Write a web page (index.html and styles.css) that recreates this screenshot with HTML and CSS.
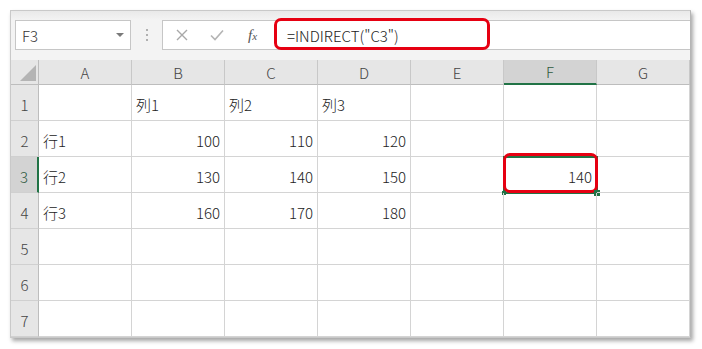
FILE: index.html
```html
<!DOCTYPE html>
<html lang="ja">

<head>
    <meta charset="UTF-8">
    <title>INDIRECT</title>
    <link rel="stylesheet" href="styles.css">
</head>

<body>
    <div class="window">
        <div class="toolbar">
            <div class="name-box">
                <span>F3</span>
                <span class="caret"></span>
            </div>
            <div class="dots"><i></i><i></i><i></i></div>
            <div class="formula-bar">
                <div class="buttons">
                    <svg class="btn" width="14" height="14" viewBox="0 0 14 14">
                        <path d="M2 2 L12 12 M12 2 L2 12" stroke="#a8a8a8" stroke-width="1.4" fill="none" />
                    </svg>
                    <svg class="btn" width="16" height="14" viewBox="0 0 16 14">
                        <path d="M2 7.5 L6 11.5 L14 2.5" stroke="#b4b4b4" stroke-width="1.6" fill="none" />
                    </svg>
                    <span class="fx">f<small>x</small></span>
                </div>
                <div class="formula">=INDIRECT("C3")</div>
                <div class="mark formula-mark"></div>
            </div>
        </div>

        <div class="sheet">
            <div class="corner"><span></span></div>
            <div class="col-head">A</div>
            <div class="col-head">B</div>
            <div class="col-head">C</div>
            <div class="col-head">D</div>
            <div class="col-head">E</div>
            <div class="col-head active">F</div>
            <div class="col-head">G</div>

            <div class="row-head">1</div>
            <div class="cell"></div>
            <div class="cell">列1</div>
            <div class="cell">列2</div>
            <div class="cell">列3</div>
            <div class="cell"></div>
            <div class="cell"></div>
            <div class="cell"></div>

            <div class="row-head">2</div>
            <div class="cell">行1</div>
            <div class="cell num">100</div>
            <div class="cell num">110</div>
            <div class="cell num">120</div>
            <div class="cell"></div>
            <div class="cell"></div>
            <div class="cell"></div>

            <div class="row-head active">3</div>
            <div class="cell">行2</div>
            <div class="cell num">130</div>
            <div class="cell num">140</div>
            <div class="cell num">150</div>
            <div class="cell"></div>
            <div class="cell num selected">140
                <span class="mark cell-mark"></span>
                <span class="handle left"></span>
                <span class="handle"></span>
            </div>
            <div class="cell"></div>

            <div class="row-head">4</div>
            <div class="cell">行3</div>
            <div class="cell num">160</div>
            <div class="cell num">170</div>
            <div class="cell num">180</div>
            <div class="cell"></div>
            <div class="cell"></div>
            <div class="cell"></div>

            <div class="row-head">5</div>
            <div class="cell"></div>
            <div class="cell"></div>
            <div class="cell"></div>
            <div class="cell"></div>
            <div class="cell"></div>
            <div class="cell"></div>
            <div class="cell"></div>

            <div class="row-head">6</div>
            <div class="cell"></div>
            <div class="cell"></div>
            <div class="cell"></div>
            <div class="cell"></div>
            <div class="cell"></div>
            <div class="cell"></div>
            <div class="cell"></div>

            <div class="row-head">7</div>
            <div class="cell"></div>
            <div class="cell"></div>
            <div class="cell"></div>
            <div class="cell"></div>
            <div class="cell"></div>
            <div class="cell"></div>
            <div class="cell"></div>
        </div>
    </div>
</body>

</html>
```

FILE: styles.css
```css
* {
    box-sizing: border-box;
}

body {
    margin: 0;
    padding: 10px;
    background-color: #ffffff;
    font-family: "Noto Sans CJK JP", "Noto Sans", sans-serif;
    font-weight: 300;
    color: #222;
}

.window {
    width: 681px;
    border: 1px solid #c9c9c9;
    border-right-color: #b5b5b5;
    background-color: #f3f3f3;
    box-shadow: 2px 3px 4px rgba(0, 0, 0, 0.35);
}

.toolbar {
    display: flex;
    align-items: center;
    height: 49px;
    padding: 9px 0 10px 4px;
    background: linear-gradient(#e9e9e9, #f3f3f3 9px);
}

.name-box {
    display: flex;
    align-items: center;
    justify-content: space-between;
    width: 116px;
    height: 30px;
    padding: 0 6px 0 6px;
    background-color: #ffffff;
    border: 1px solid #c6c6c6;
    font-size: 15px;
    color: #333;
}

.caret {
    width: 0;
    height: 0;
    border-left: 4px solid transparent;
    border-right: 4px solid transparent;
    border-top: 4px solid #7a7a7a;
}

.dots {
    display: flex;
    flex-direction: column;
    align-items: center;
    gap: 3px;
    width: 31px;
}

.dots i {
    width: 2px;
    height: 2px;
    background-color: #b0b0b0;
}

.formula-bar {
    position: relative;
    display: flex;
    align-items: center;
    flex: 1;
    height: 30px;
    background-color: #ffffff;
    border: 1px solid #c6c6c6;
    border-right: none;
}

.buttons {
    display: flex;
    align-items: center;
    width: 124px;
    padding-left: 12px;
    gap: 20px;
}

.fx {
    font-family: "Liberation Serif", serif;
    font-style: italic;
    font-size: 15px;
    color: #555;
    margin-left: 3px;
}

.fx small {
    font-size: 11px;
}

.formula {
    font-size: 15px;
    color: #222;
}

.mark {
    position: absolute;
    border: 3px solid #e60012;
    border-radius: 7px;
}

.formula-mark {
    left: 111px;
    top: -3px;
    width: 216px;
    height: 32px;
}

.sheet {
    display: grid;
    grid-template-columns: 28px repeat(7, 93px);
    grid-template-rows: 25px repeat(7, 36px);
    background-color: #ffffff;
}

.corner {
    position: relative;
    background-color: #e6e6e6;
    border-right: 1px solid #bdbdbd;
    border-bottom: 1px solid #bdbdbd;
}

.corner span {
    position: absolute;
    left: 9px;
    top: 5px;
    width: 16px;
    height: 16px;
    background-color: #b4b4b4;
    clip-path: polygon(100% 0, 100% 100%, 0 100%);
}

.col-head {
    display: flex;
    align-items: center;
    justify-content: center;
    background-color: #e6e6e6;
    border-right: 1px solid #c8c8c8;
    border-bottom: 1px solid #bdbdbd;
    font-size: 15px;
    color: #444;
}

.col-head.active {
    background-color: #d3d3d3;
    border-bottom: 2px solid #217346;
    color: #2f5a3e;
}

.row-head {
    display: flex;
    align-items: flex-end;
    justify-content: center;
    padding-bottom: 5px;
    background-color: #e6e6e6;
    border-right: 1px solid #bdbdbd;
    border-bottom: 1px solid #d0d0d0;
    font-size: 15px;
    color: #444;
}

.row-head.active {
    background-color: #d3d3d3;
    border-right: 2px solid #217346;
    color: #2f5a3e;
}

.cell {
    position: relative;
    display: flex;
    align-items: flex-end;
    padding: 0 4px 5px 4px;
    border-right: 1px solid #d4d4d4;
    border-bottom: 1px solid #d4d4d4;
    font-size: 15px;
    color: #222;
}

.cell.num {
    justify-content: flex-end;
}

.cell.selected {
    outline: 2px solid #217346;
    outline-offset: -1px;
}

.handle {
    position: absolute;
    right: -4px;
    bottom: -4px;
    width: 6px;
    height: 6px;
    background-color: #217346;
}

.handle.left {
    left: -2px;
    right: auto;
    bottom: -3px;
    width: 4px;
    height: 4px;
}

.cell-mark {
    left: -1px;
    top: -4px;
    width: 95px;
    height: 40px;
}
```
